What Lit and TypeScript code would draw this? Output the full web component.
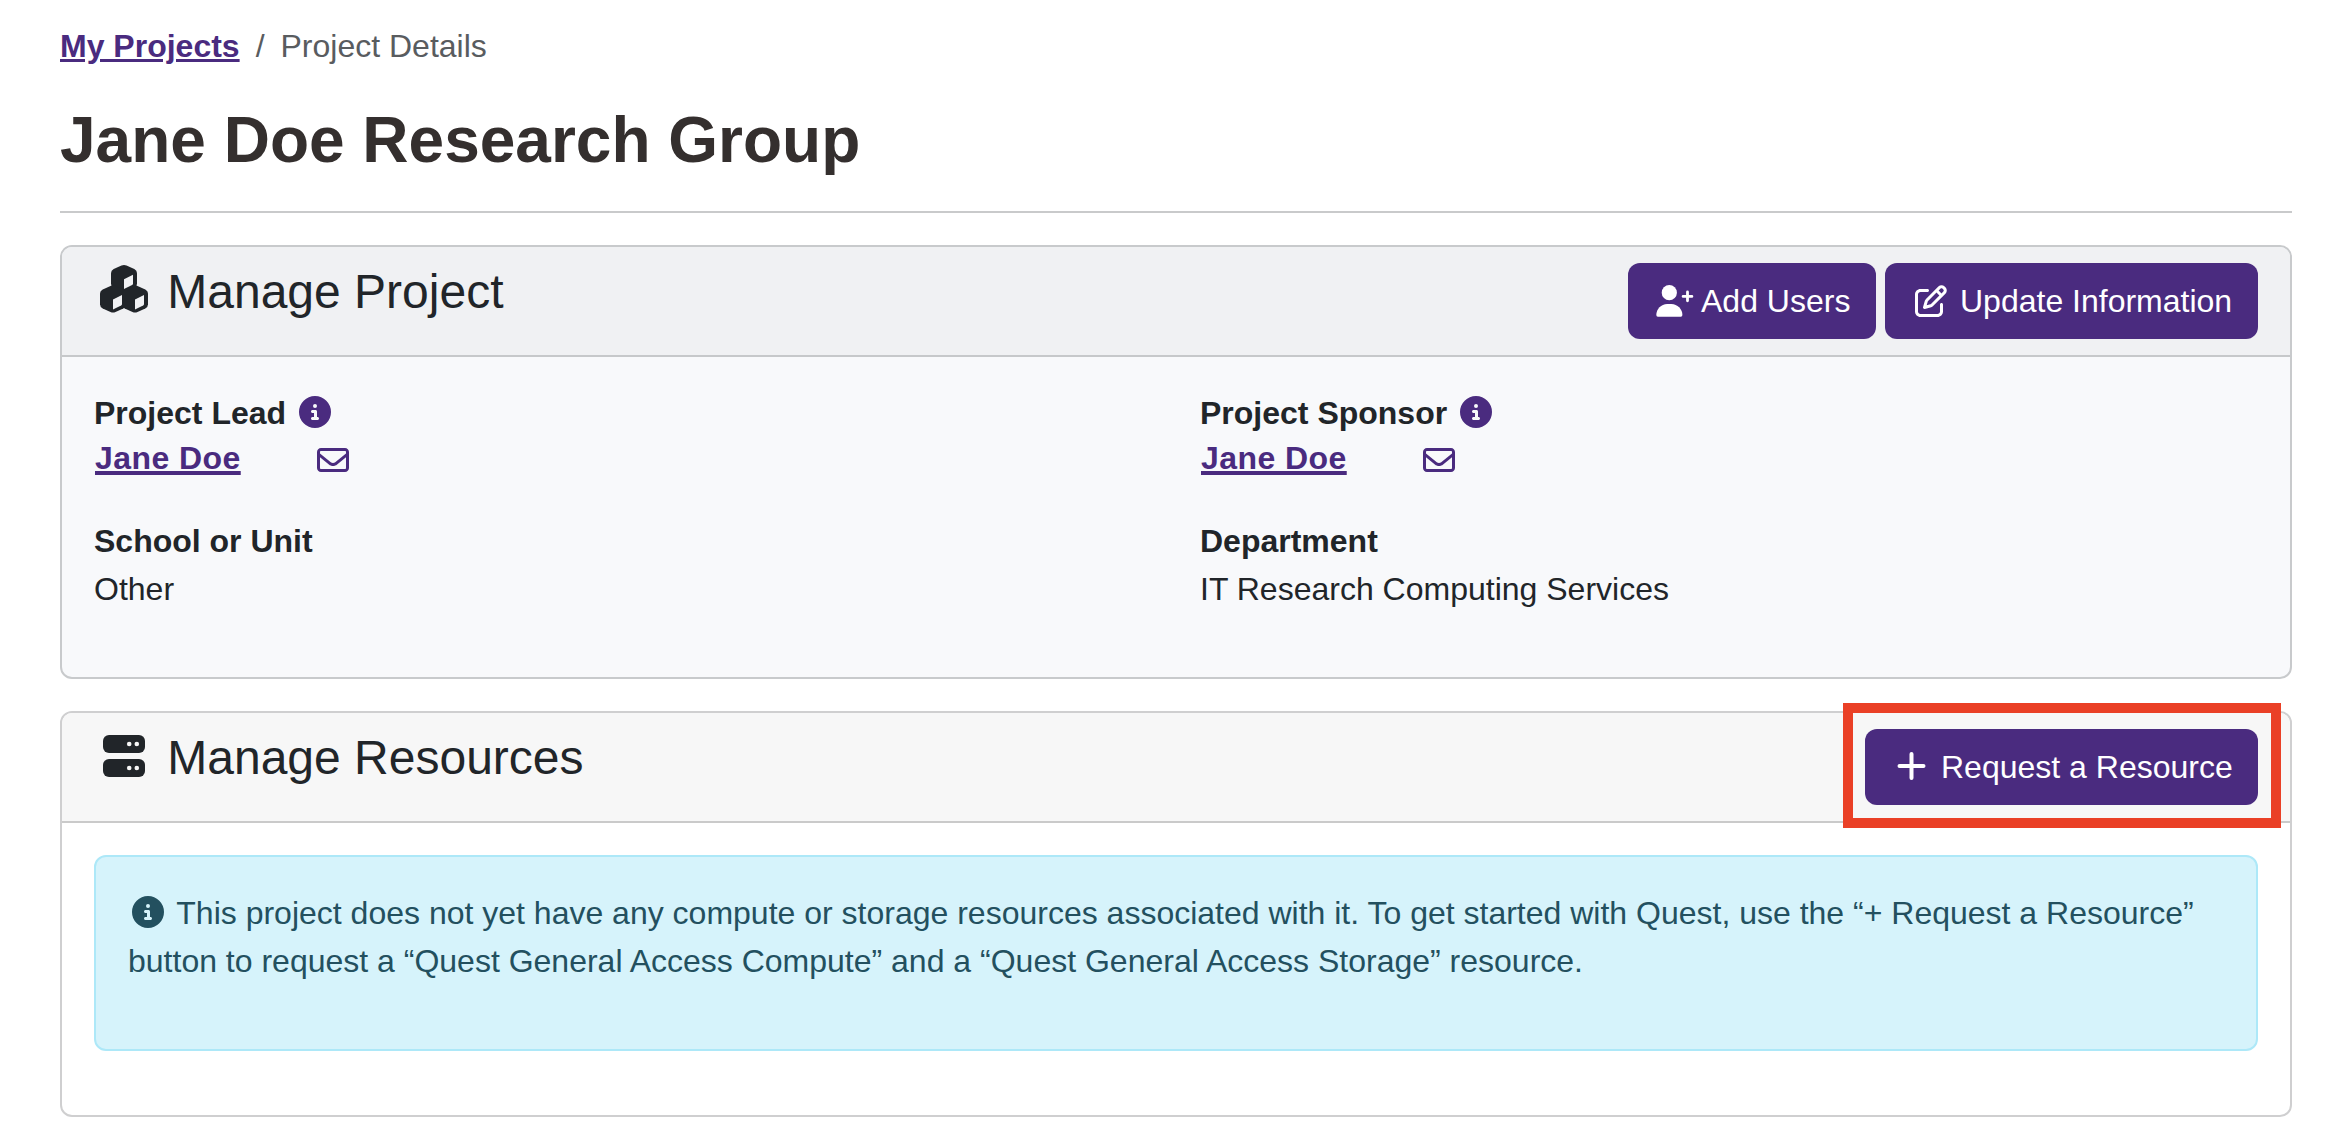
import { LitElement, html, css, svg } from "lit";
import { customElement } from "lit/decorators.js";

const infoIcon = (cls: string) => html`<svg class=${cls} viewBox="0 0 512 512" aria-hidden="true">
  <path fill="currentColor" fill-rule="evenodd" d="M256 0a256 256 0 1 1 0 512a256 256 0 1 1 0-512ZM224 160a32 32 0 1 0 64 0a32 32 0 1 0-64 0M216 224c-13.300 0-24 10.700-24 24s10.700 24 24 24h24v64h-24c-13.300 0-24 10.700-24 24s10.700 24 24 24h80c13.300 0 24-10.700 24-24s-10.700-24-24-24h-8v-88c0-13.300-10.700-24-24-24Z"/>
</svg>`;

const mailIcon = html`<svg class="mail" viewBox="0 0 512 512" aria-hidden="true">
  <path fill="currentColor" d="M64 112c-8.800 0-16 7.200-16 16v22.100L220.500 291.700c20.700 17 50.400 17 71.100 0L464 150.100V128c0-8.800-7.200-16-16-16H64zM48 212.200V384c0 8.800 7.200 16 16 16H448c8.800 0 16-7.200 16-16V212.200L322 328.800c-38.400 31.500-93.700 31.500-132 0L48 212.200zM0 128C0 92.700 28.700 64 64 64H448c35.300 0 64 28.700 64 64V384c0 35.300-28.700 64-64 64H64c-35.300 0-64-28.700-64-64V128z"/>
</svg>`;

const cube = (x: number, y: number) => svg`<g transform="translate(${x} ${y})">
  <path fill="currentColor" d="M10.500.5Q13 -.6 15.500.5L23.300 4Q26 5.300 26 8.200V18.800Q26 21.700 23.300 23L15.500 26.600Q13 27.700 10.500 26.600L2.700 23Q0 21.700 0 18.800V8.200Q0 5.300 2.700 4Z"/>
  <path class="face" d="M13 14.200L22 9.700V18.500Q22 19.500 21.100 20L13 24Z"/>
</g>`;

@customElement("app-root")
export class AppRoot extends LitElement {
  static styles = css`
    :host { display: block; box-sizing: border-box; width: 2330px; height: 1140px; background: #fff; overflow: hidden;
      padding: 22px 38px 0 60px; font: 32px/48px "Liberation Sans", Arial, sans-serif; color: #212529; }
    *, *::after { box-sizing: border-box; }
    h1, h2, p { margin: 0; }
    a { color: #4a2b7f; font-weight: 700; text-decoration: underline; text-decoration-thickness: 3px; }
    nav { display: flex; height: 48px; color: #595c5f; }
    .sep { padding: 0 16px; }
    h1 { margin-top: 30px; height: 80px; font-size: 64px; line-height: 80px; color: #342f2e; }
    .rule { height: 2px; margin: 31px 0 32px; background: #c9cacb; }
    .card { border: 2px solid #c8cacc; border-radius: 12px; background: #f8f9fb; margin-bottom: 32px; }
    .head { display: flex; justify-content: space-between; align-items: flex-start; height: 110px; padding: 16px 32px;
      border-bottom: 2px solid #c6c8ca; background: #f0f1f3; border-radius: 10px 10px 0 0; }
    .plain { background: #fff; border-color: #cfcfd0; }
    .plain .head { background: #f7f7f7; border-color: #cacaca; }
    h2 { display: flex; gap: 13.300px; font-size: 48px; line-height: 57.600px; font-weight: 400; }
    h2 svg { width: 60px; height: 60px; display: block; }
    .face { fill: #f0f1f3; }
    .dot { fill: #f7f7f7; }
    .buttons { display: flex; gap: 9px; }
    .btn { display: flex; align-items: center; height: 76px; border-radius: 12px; background: #4a2b7f; color: #fff; white-space: nowrap; }
    .add { width: 248px; padding-left: 28px; }
    .update { width: 373px; padding-left: 26px; }
    .request { position: relative; width: 393px; padding-left: 26px; }
    .request::after { content: ""; position: absolute; left: -22px; top: -26px; width: 438px; height: 125px; border: 10px solid #ea4026; }
    .btn svg { flex: none; width: 40px; height: 32px; }
    .add span { padding-left: 5px; }
    .update span { padding-left: 9px; }
    .request span { padding-left: 10px; }
    .body { display: grid; grid-template-columns: 1106px 1fr; align-content: start; row-gap: 32px; padding: 32px; height: 320px; }
    .label { display: flex; align-items: center; font-weight: 700; }
    .info { width: 32px; height: 32px; margin-left: 13px; color: #4a2b7f; position: relative; top: -1px; }
    .person { display: flex; height: 48px; }
    .person a { width: 146px; margin: -3px 0 0 1px; letter-spacing: .430px; text-decoration-thickness: 4px; text-underline-offset: 2px; text-decoration-skip-ink: none; }
    .person .mail { width: 32px; height: 32px; margin: 7px 0 0 76px; color: #4a2b7f; }
    .lone { padding: 32px; height: 292px; }
    .alert { height: 196px; padding: 32px; border: 2px solid #ade8f8; border-radius: 12px; background: #d6f3fb; color: #23505f; white-space: nowrap; }
    .note { display: inline-block; width: 32px; height: 32px; margin: 0 4px; vertical-align: -4px; }
  `;

  person() {
    return html`<div class="person"><a>Jane Doe</a>${mailIcon}</div>`;
  }

  render() {
    return html`
      <nav><a>My Projects</a><span class="sep">/</span><span>Project Details</span></nav>
      <h1>Jane Doe Research Group</h1>
      <div class="rule"></div>
      <section class="card">
        <div class="head">
          <h2><svg viewBox="0 0 60 60">${cube(17, 2)}${cube(6, 22.4)}${cube(28, 22.4)}</svg>Manage Project</h2>
          <div class="buttons">
            <div class="btn add"><svg viewBox="0 0 40 32"><g fill="currentColor"><circle cx="13.300" cy="7.700" r="7.600"/><path d="M.3 30C.3 24 5.200 18.900 11.200 18.900h4.200c6 0 11 5 11 11.100q0 1.700-1.600 1.700H1.900Q.3 31.700.3 30Z"/></g><path d="M31.500 7V15.800M27.100 11.400H35.900" stroke="currentColor" stroke-width="2.800" stroke-linecap="round"/></svg><span>Add Users</span></div>
            <div class="btn update"><svg viewBox="0 0 512 512"><path fill="currentColor" d="M441 58.900L453.100 71c9.400 9.400 9.400 24.600 0 33.900L424 134.100 377.900 88 407 58.900c9.400-9.400 24.600-9.400 33.900 0zM209.800 256.200L344 121.900 390.100 168 255.800 302.200c-2.900 2.900-6.500 5-10.400 6.100l-58.500 16.700 16.700-58.500c1.100-3.900 3.200-7.500 6.100-10.400zM373.100 25L175.800 222.200c-8.700 8.700-15 19.400-18.300 31.100l-28.600 100c-2.400 8.400-.1 17.400 6.100 23.600s15.200 8.500 23.600 6.100l100-28.600c11.800-3.400 22.500-9.700 31.100-18.300L487 138.900c28.100-28.100 28.100-73.700 0-101.800L474.900 25C446.800-3.100 401.200-3.100 373.100 25zM88 64C39.400 64 0 103.400 0 152V424c0 48.600 39.400 88 88 88H360c48.600 0 88-39.400 88-88V312c0-13.300-10.700-24-24-24s-24 10.700-24 24V424c0 22.100-17.900 40-40 40H88c-22.100 0-40-17.900-40-40V152c0-22.100 17.900-40 40-40H200c13.300 0 24-10.700 24-24s-10.700-24-24-24H88z"/></svg><span>Update Information</span></div>
          </div>
        </div>
        <div class="body">
          <div><div class="label">Project Lead${infoIcon("info")}</div>${this.person()}</div>
          <div><div class="label">Project Sponsor${infoIcon("info")}</div>${this.person()}</div>
          <div><div class="label">School or Unit</div><p>Other</p></div>
          <div><div class="label">Department</div><p>IT Research Computing Services</p></div>
        </div>
      </section>
      <section class="card plain">
        <div class="head">
          <h2><svg viewBox="0 0 60 60"><g fill="currentColor"><rect x="9" y="6" width="42" height="18" rx="6"/><rect x="9" y="30" width="42" height="18" rx="6"/></g><g class="dot"><circle cx="35.200" cy="15" r="2.300"/><circle cx="42.800" cy="15" r="2.300"/><circle cx="35.200" cy="39" r="2.300"/><circle cx="42.800" cy="39" r="2.300"/></g></svg>Manage Resources</h2>
          <div class="btn request"><svg viewBox="0 0 40 32"><path d="M20.500 3V27M8.500 15H32.500" stroke="currentColor" stroke-width="4" stroke-linecap="round"/></svg><span>Request a Resource</span></div>
        </div>
        <div class="lone">
          <div class="alert">${infoIcon("note")} This project does not yet have any compute or storage resources associated with it. To get started with Quest, use the “+ Request a Resource”<br>button to request a “Quest General Access Compute” and a “Quest General Access Storage” resource.</div>
        </div>
      </section>
    `;
  }
}
